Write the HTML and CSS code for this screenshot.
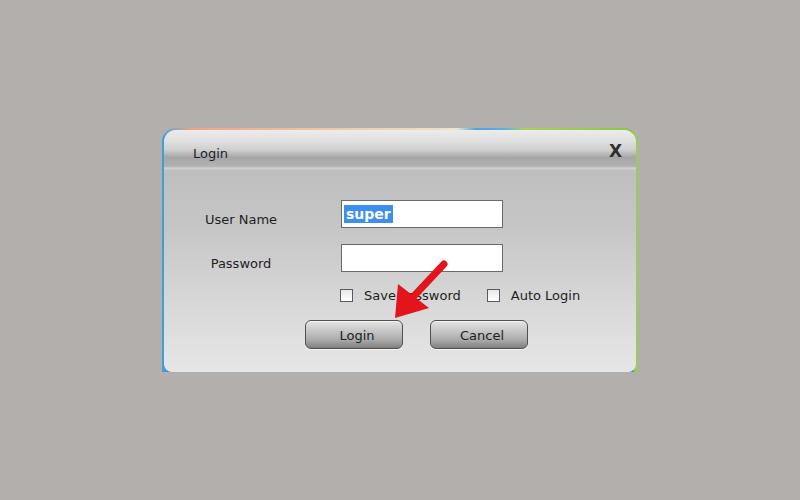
FILE: index.html
```html
<!DOCTYPE html>
<html>
<head>
<meta charset="utf-8">
<link rel="stylesheet" href="styles.css">
</head>
<body>
<div class="stage">
  <div class="frame">
    <div class="panel">
      <div class="titlebar">
        <span class="title">Login</span>
        <span class="close">X</span>
      </div>
      <div class="content">
        <div class="grid">
          <div class="label">User Name</div>
          <div class="field"><span class="sel">super</span></div>
          <div class="label">Password</div>
          <div class="field"></div>
        </div>
        <div class="checks">
          <label class="check"><span class="box"></span>Save Password</label>
          <label class="check"><span class="box"></span>Auto Login</label>
        </div>
        <div class="buttons">
          <button class="btn">Login</button>
          <button class="btn">Cancel</button>
        </div>
      </div>
    </div>
    <svg class="arrow" width="300" height="220" viewBox="0 0 300 220">
      <line x1="282" y1="136" x2="252" y2="168" stroke="#e3141b" stroke-width="7" stroke-linecap="round"/>
      <polygon points="233,190 236,156 267,180" fill="#e3141b"/>
    </svg>
  </div>
</div>
</body>
</html>
```

FILE: styles.css
```css
html, body {
  margin: 0;
  padding: 0;
}
body {
  background: #b3afac;
  font-family: "DejaVu Sans", "Liberation Sans", sans-serif;
  font-size: 13px;
  color: #1e1e24;
}
.stage {
  height: 100vh;
  display: flex;
  align-items: center;
  justify-content: center;
}
.frame {
  position: relative;
  width: 476px;
  height: 244px;
  box-sizing: border-box;
  padding: 2px 2px 0 2px;
  border-radius: 14px 14px 0 0;
  background:
    linear-gradient(to right, #3b9fe0 0, #3b9fe0 4px, transparent 4px, transparent 472px, #9ccc58 472px),
    linear-gradient(to bottom, transparent 0, transparent 200px, #3a8fd8 240px),
    linear-gradient(to right, #4aa6e4 0%, #e9a680 6%, #f1c19b 30%, #eedcc0 55%, #e8e4d4 62%, #4aa4de 66%, #5fb0e0 72%, #a8d05a 76%, #8cc63f 100%);
}
.panel {
  height: 242px;
  border-radius: 12px 12px 8px 8px;
  overflow: hidden;
  display: flex;
  flex-direction: column;
  background: linear-gradient(to bottom, #b9b9b9 0%, #c6c6c6 40%, #dfdfdf 85%, #e6e6e6 100%);
}
.titlebar {
  height: 40px;
  flex: none;
  display: flex;
  align-items: center;
  justify-content: space-between;
  padding: 0 14px 0 29px;
  box-sizing: border-box;
  background: linear-gradient(to bottom, #ececec 0%, #dedede 30%, #cfcfcf 50%, #a6a6a6 68%, #acacac 80%, #b4b4b4 92%, #d6d6d6 95%, #c2c2c2 100%);
}
.title {
  font-size: 13px;
  color: #1c1c2c;
  padding-top: 6px;
}
.close {
  font-weight: bold;
  font-size: 17px;
  color: #303030;
  padding-top: 1px;
}
.content {
  flex: 1;
  padding: 30px 0 0 20px;
}
.grid {
  display: grid;
  grid-template-columns: 114px 162px;
  grid-auto-rows: 28px;
  column-gap: 43px;
  row-gap: 16px;
}
.label {
  text-align: center;
  padding-top: 12px;
  line-height: 16px;
}
.field {
  height: 28px;
  box-sizing: border-box;
  background: #fff;
  border: 1px solid #6a6a6a;
  display: flex;
  align-items: center;
  padding-left: 2px;
}
.sel {
  background: #3c8ef0;
  color: #fff;
  font-weight: bold;
  font-size: 14px;
  line-height: 18px;
  padding: 0 2px;
}
.checks {
  display: flex;
  gap: 26px;
  margin: 16px 0 0 156px;
  height: 14px;
  align-items: center;
}
.check {
  display: flex;
  align-items: center;
  gap: 11px;
  color: #1e1e24;
}
.box {
  width: 13px;
  height: 13px;
  box-sizing: border-box;
  border: 1px solid #5a5a5a;
  background: linear-gradient(#e8e8e8, #ffffff);
}
.buttons {
  display: flex;
  gap: 27px;
  margin: 18px 0 0 121px;
}
.btn {
  width: 98px;
  height: 29px;
  box-sizing: border-box;
  border: 1px solid #505050;
  border-radius: 6px;
  font-family: "DejaVu Sans", sans-serif;
  font-size: 13px;
  color: #1e1e24;
  padding: 1px 0 0 6px;
  background: linear-gradient(to bottom, #e4e4e4 0%, #c8c8c8 35%, #aaaaaa 70%, #808080 100%);
  box-shadow: 0 1px 0 rgba(255,255,255,0.7), inset 0 1px 0 rgba(255,255,255,0.6);
}
.arrow {
  position: absolute;
  left: 0;
  top: 0;
  pointer-events: none;
}
```
